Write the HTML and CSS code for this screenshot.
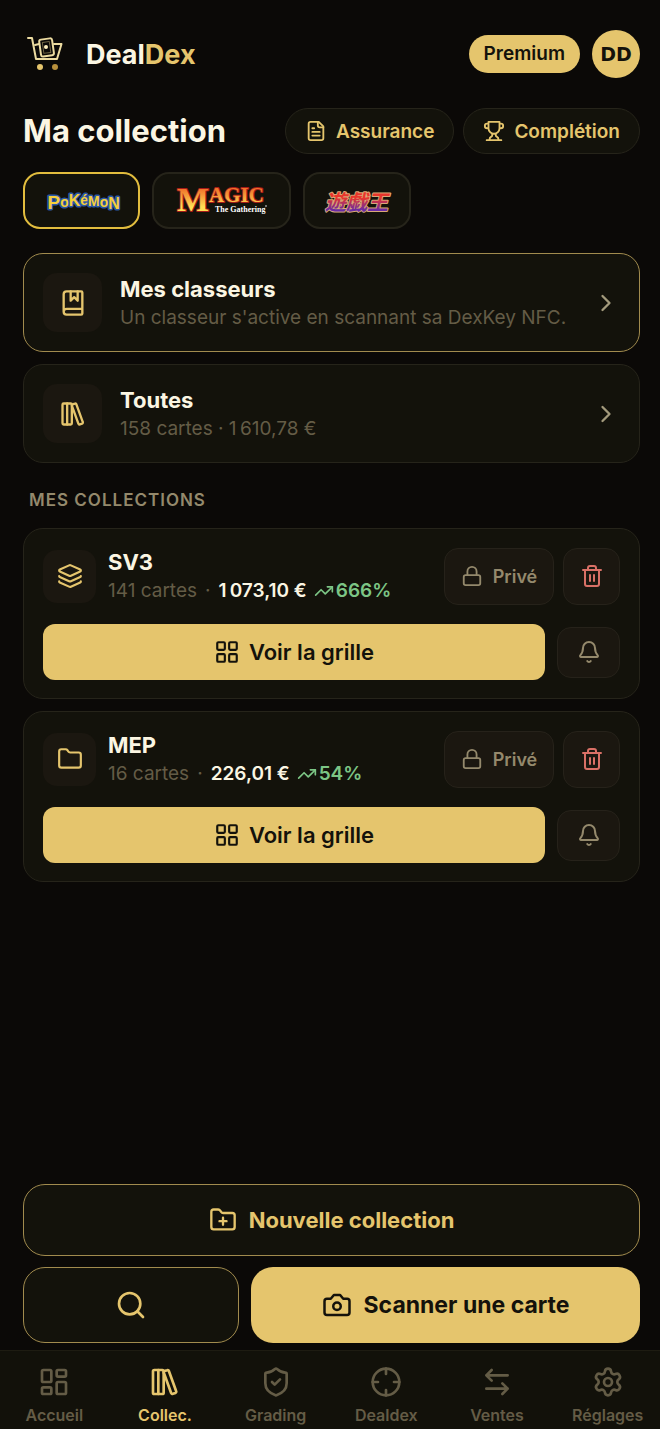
FILE: index.html
```
<!DOCTYPE html>
<html lang="fr">
<head>
  <meta charset="UTF-8" />
  <meta name="viewport" content="width=device-width, initial-scale=1.0"/>
  <title>DealDex - Ma collection</title>
  <link rel="stylesheet" href="styles.css">
</head>
<body>

  <!-- Shared icons -->
  <svg class="sprite" aria-hidden="true">
    <symbol id="i-chevron" viewBox="0 0 24 24"><path d="m9 18 6-6-6-6"/></symbol>
    <symbol id="i-books" viewBox="0 0 24 24"><rect x="3" y="3" width="8" height="18" rx="1"/><path d="M7 3v18"/><path d="M20.4 18.9c.2.5-.1 1.1-.6 1.3l-1.9.7c-.5.2-1.1-.1-1.3-.6L11.1 5.1c-.2-.5.1-1.1.6-1.3l1.9-.7c.5-.2 1.1.1 1.3.6Z"/></symbol>
    <symbol id="i-lock" viewBox="0 0 24 24"><rect x="3" y="11" width="18" height="11" rx="2"/><path d="M7 11V7a5 5 0 0 1 10 0v4"/></symbol>
    <symbol id="i-trash" viewBox="0 0 24 24"><path d="M3 6h18M19 6v14a2 2 0 0 1-2 2H7a2 2 0 0 1-2-2V6M8 6V4a2 2 0 0 1 2-2h4a2 2 0 0 1 2 2v2M10 11v6M14 11v6"/></symbol>
    <symbol id="i-bell" viewBox="0 0 24 24"><path d="M10.268 21a2 2 0 0 0 3.464 0"/><path d="M3.262 15.326A1 1 0 0 0 4 17h16a1 1 0 0 0 .74-1.673C19.41 13.956 18 12.499 18 8A6 6 0 0 0 6 8c0 4.499-1.411 5.956-2.738 7.326"/></symbol>
    <symbol id="i-grid" viewBox="0 0 24 24"><rect x="3" y="3" width="7" height="7" rx="1"/><rect x="14" y="3" width="7" height="7" rx="1"/><rect x="14" y="14" width="7" height="7" rx="1"/><rect x="3" y="14" width="7" height="7" rx="1"/></symbol>
    <symbol id="i-trend" viewBox="0 0 24 24"><path d="M16 7h6v6"/><path d="m22 7-8.5 8.5-5-5L2 17"/></symbol>
  </svg>

  <header class="topbar">
    <a class="brand" href="#">
      <svg class="brand-logo" viewBox="0 0 38 38" aria-hidden="true">
        <g fill="none" stroke="#ecdba0" stroke-width="2" stroke-linecap="round" stroke-linejoin="round">
          <path d="M2 3h4l4 21h21l4.500-15H28"/>
          <path d="M9 10l4-1"/>
          <rect x="14" y="4" width="13" height="17" rx="2" transform="rotate(-8 20 12)" fill="#0b0907"/>
          <rect x="17" y="7" width="7" height="11" transform="rotate(-8 20 12)" stroke="#6d6344" stroke-width="1"/>
        </g>
        <circle cx="20" cy="12" r="2" fill="#fff0bd"/>
        <circle cx="14" cy="32" r="3" fill="#e5c56d"/>
        <circle cx="29" cy="32" r="3" fill="#b8903c"/>
      </svg>
      <span class="brand-name">Deal<span>Dex</span></span>
    </a>
    <div class="account">
      <span class="premium">Premium</span>
      <button class="avatar" type="button" aria-label="Profil">DD</button>
    </div>
  </header>

  <main>
    <div class="title-row">
      <h1>Ma collection</h1>
      <div class="pills">
        <button class="pill" type="button">
          <svg class="icon s22" viewBox="0 0 24 24"><path d="M15 2H6a2 2 0 0 0-2 2v16a2 2 0 0 0 2 2h12a2 2 0 0 0 2-2V7Z"/><path d="M14 2v4a2 2 0 0 0 2 2h4M10 9H8M16 13H8M16 17H8"/></svg>
          Assurance
        </button>
        <button class="pill" type="button">
          <svg class="icon s22" viewBox="0 0 24 24"><path d="M6 9H4.500a2.500 2.500 0 0 1 0-5H6M18 9h1.500a2.500 2.500 0 0 0 0-5H18M4 22h16M10 14.660V17c0 .550-.470.980-.970 1.210C7.850 18.750 7 20.240 7 22M14 14.660V17c0 .550.470.980.970 1.210C16.150 18.750 17 20.240 17 22M18 2H6v7a6 6 0 0 0 12 0V2Z"/></svg>
          Complétion
        </button>
      </div>
    </div>

    <div class="games">
      <button class="game pokemon active" type="button" aria-label="Pokémon">
        <svg viewBox="0 0 76 34" aria-hidden="true">
          <text x="4" y="25"><tspan font-size="19">P</tspan><tspan dy="-2">o</tspan><tspan dy="-1" font-size="16">K</tspan><tspan dy="-1">é</tspan><tspan dy="1">M</tspan><tspan dy="1">o</tspan><tspan dy="2" font-size="16">N</tspan></text>
        </svg>
      </button>
      <button class="game magic" type="button" aria-label="Magic The Gathering">
        <svg viewBox="0 0 99 34" aria-hidden="true">
          <defs>
            <linearGradient id="fire" x1="0" y1="0" x2="0" y2="1"><stop offset="0.200" stop-color="#f0702a"/><stop offset="0.700" stop-color="#ffdf55"/></linearGradient>
          </defs>
          <text class="magic-word" y="27" x="5"><tspan font-size="34">M</tspan><tspan font-size="21" dy="-9">AGIC</tspan></text>
          <text class="magic-sub" x="43" y="28">The Gathering</text>
          <circle cx="94" cy="22" r="1" fill="#999"/>
        </svg>
      </button>
      <button class="game yugioh" type="button" aria-label="Yu-Gi-Oh!">
        <svg viewBox="0 0 68 34" aria-hidden="true">
          <defs>
            <linearGradient id="duel" x1="0" y1="0" x2="0" y2="1"><stop offset="0.400" stop-color="#e8352c"/><stop offset="0.800" stop-color="#6a2aa5"/></linearGradient>
          </defs>
          <text x="2" y="26">遊戯王</text>
        </svg>
      </button>
    </div>

    <a class="card link-card highlight" href="#">
      <span class="tile large"><svg class="icon s28" viewBox="0 0 24 24"><path d="M10 2v8l3-3 3 3V2"/><path d="M4 19.500v-15A2.500 2.500 0 0 1 6.500 2H19a1 1 0 0 1 1 1v18a1 1 0 0 1-1 1H6.500a1 1 0 0 1 0-5H20"/></svg></span>
      <span class="link-text">
        <strong>Mes classeurs</strong>
        <span>Un classeur s'active en scannant sa DexKey NFC.</span>
      </span>
      <svg class="icon s28 chevron"><use href="#i-chevron"/></svg>
    </a>

    <a class="card link-card" href="#">
      <span class="tile large"><svg class="icon s28"><use href="#i-books"/></svg></span>
      <span class="link-text">
        <strong>Toutes</strong>
        <span>158 cartes · 1&#8239;610,78 €</span>
      </span>
      <svg class="icon s28 chevron"><use href="#i-chevron"/></svg>
    </a>

    <h2>Mes collections</h2>

    <section class="card collection">
      <div class="collection-head">
        <span class="tile"><svg class="icon s26" viewBox="0 0 24 24"><path d="M12.830 2.180a2 2 0 0 0-1.660 0L2.600 6.080a1 1 0 0 0 0 1.830l8.580 3.910a2 2 0 0 0 1.660 0l8.580-3.900a1 1 0 0 0 0-1.830z"/><path d="M2 12a1 1 0 0 0 .580.910l8.600 3.910a2 2 0 0 0 1.650 0l8.580-3.900A1 1 0 0 0 22 12"/><path d="M2 17a1 1 0 0 0 .580.910l8.600 3.910a2 2 0 0 0 1.650 0l8.580-3.900A1 1 0 0 0 22 17"/></svg></span>
        <div class="collection-text">
          <h3>SV3</h3>
          <p><span>141 cartes</span><span class="dot">·</span><b>1&#8239;073,10 €</b><span class="gain"><svg class="icon s20"><use href="#i-trend"/></svg>666%</span></p>
        </div>
        <button class="ghost private" type="button"><svg class="icon s22"><use href="#i-lock"/></svg>Privé</button>
        <button class="ghost delete" type="button" aria-label="Supprimer"><svg class="icon s24"><use href="#i-trash"/></svg></button>
      </div>
      <div class="collection-actions">
        <button class="gold grid-btn" type="button"><svg class="icon s26"><use href="#i-grid"/></svg>Voir la grille</button>
        <button class="ghost bell" type="button" aria-label="Alertes"><svg class="icon s24"><use href="#i-bell"/></svg></button>
      </div>
    </section>

    <section class="card collection">
      <div class="collection-head">
        <span class="tile"><svg class="icon s26" viewBox="0 0 24 24"><path d="M20 20a2 2 0 0 0 2-2V8a2 2 0 0 0-2-2h-7.900a2 2 0 0 1-1.690-.900L9.600 3.900A2 2 0 0 0 7.930 3H4a2 2 0 0 0-2 2v13a2 2 0 0 0 2 2Z"/></svg></span>
        <div class="collection-text">
          <h3>MEP</h3>
          <p><span>16 cartes</span><span class="dot">·</span><b>226,01 €</b><span class="gain"><svg class="icon s20"><use href="#i-trend"/></svg>54%</span></p>
        </div>
        <button class="ghost private" type="button"><svg class="icon s22"><use href="#i-lock"/></svg>Privé</button>
        <button class="ghost delete" type="button" aria-label="Supprimer"><svg class="icon s24"><use href="#i-trash"/></svg></button>
      </div>
      <div class="collection-actions">
        <button class="gold grid-btn" type="button"><svg class="icon s26"><use href="#i-grid"/></svg>Voir la grille</button>
        <button class="ghost bell" type="button" aria-label="Alertes"><svg class="icon s24"><use href="#i-bell"/></svg></button>
      </div>
    </section>
  </main>

  <div class="dock">
    <button class="outline new" type="button">
      <svg class="icon s28" viewBox="0 0 24 24"><path d="M12 10v6M9 13h6"/><path d="M20 20a2 2 0 0 0 2-2V8a2 2 0 0 0-2-2h-7.900a2 2 0 0 1-1.690-.900L9.600 3.900A2 2 0 0 0 7.930 3H4a2 2 0 0 0-2 2v13a2 2 0 0 0 2 2Z"/></svg>
      Nouvelle collection
    </button>
    <div class="dock-row">
      <button class="outline search" type="button" aria-label="Rechercher"><svg class="icon s32" viewBox="0 0 24 24"><circle cx="11" cy="11" r="8"/><path d="m21 21-4.300-4.300"/></svg></button>
      <button class="gold scan" type="button">
        <svg class="icon s30" viewBox="0 0 24 24"><path d="M14.500 4h-5L7 7H4a2 2 0 0 0-2 2v9a2 2 0 0 0 2 2h16a2 2 0 0 0 2-2V9a2 2 0 0 0-2-2h-3z"/><circle cx="12" cy="13" r="3"/></svg>
        Scanner une carte
      </button>
    </div>
  </div>

  <nav class="tabbar">
    <ul>
      <li><a href="#"><svg class="icon s32" viewBox="0 0 24 24"><rect x="3" y="3" width="7" height="9" rx="1"/><rect x="14" y="3" width="7" height="5" rx="1"/><rect x="14" y="12" width="7" height="9" rx="1"/><rect x="3" y="16" width="7" height="5" rx="1"/></svg>Accueil</a></li>
      <li><a class="current" href="#"><svg class="icon s32"><use href="#i-books"/></svg>Collec.</a></li>
      <li><a href="#"><svg class="icon s32" viewBox="0 0 24 24"><path d="M20 13c0 5-3.500 7.500-7.660 8.950a1 1 0 0 1-.670-.010C7.500 20.500 4 18 4 13V6a1 1 0 0 1 1-1c2 0 4.500-1.200 6.240-2.720a1.170 1.170 0 0 1 1.520 0C14.510 3.810 17 5 19 5a1 1 0 0 1 1 1z"/><path d="m9 12 2 2 4-4"/></svg>Grading</a></li>
      <li><a href="#"><svg class="icon s32" viewBox="0 0 24 24"><circle cx="12" cy="12" r="10"/><path d="M22 12h-4M6 12H2M12 6V2M12 22v-4"/></svg>Dealdex</a></li>
      <li><a href="#"><svg class="icon s32" viewBox="0 0 24 24"><path d="M8 3 4 7l4 4M4 7h16M16 21l4-4-4-4M20 17H4"/></svg>Ventes</a></li>
      <li><a href="#"><svg class="icon s32" viewBox="0 0 24 24"><path d="M9.671 4.136a2.340 2.340 0 0 1 4.659 0 2.340 2.340 0 0 0 3.319 1.915 2.340 2.340 0 0 1 2.330 4.033 2.340 2.340 0 0 0 0 3.831 2.340 2.340 0 0 1-2.330 4.033 2.340 2.340 0 0 0-3.319 1.915 2.340 2.340 0 0 1-4.659 0 2.340 2.340 0 0 0-3.320-1.915 2.340 2.340 0 0 1-2.330-4.033 2.340 2.340 0 0 0 0-3.831A2.340 2.340 0 0 1 6.350 6.051a2.340 2.340 0 0 0 3.319-1.915"/><circle cx="12" cy="12" r="3"/></svg>Réglages</a></li>
    </ul>
  </nav>

</body>
</html>
```

FILE: styles.css
```
* {
  box-sizing: border-box;
}

body {
  margin: 0;
  min-height: 100vh;
  display: flex;
  flex-direction: column;
  background: #0b0907;
  color: #fbf6e3;
  font-family: Inter, 'Liberation Sans', sans-serif;
}

h1, h2, h3, p, ul {
  margin: 0;
  padding: 0;
}

a {
  color: inherit;
  text-decoration: none;
}

button {
  display: flex;
  align-items: center;
  justify-content: center;
  padding: 0;
  font-family: inherit;
  cursor: pointer;
}

.sprite {
  display: none;
}

.icon {
  flex: none;
  fill: none;
  stroke: currentColor;
  stroke-width: 2;
  stroke-linecap: round;
  stroke-linejoin: round;
}

.s20 { width: 20px; height: 20px; }
.s22 { width: 22px; height: 22px; }
.s24 { width: 24px; height: 24px; }
.s26 { width: 26px; height: 26px; }
.s28 { width: 28px; height: 28px; }
.s30 { width: 30px; height: 30px; }
.s32 { width: 32px; height: 32px; }

/* Header */
.topbar {
  display: flex;
  align-items: center;
  justify-content: space-between;
  padding: 30px 20px 0 26px;
}

.brand {
  display: flex;
  align-items: center;
  gap: 22px;
}

.brand-logo {
  width: 38px;
  height: 38px;
}

.brand-name {
  font-size: 27px;
  font-weight: 700;
}

.brand-name span {
  color: #e5c56d;
}

.account {
  display: flex;
  align-items: center;
  gap: 12px;
}

.premium {
  padding: 0 15px;
  border-radius: 19px;
  background: #e5c56d;
  color: #14120b;
  font-size: 19px;
  font-weight: 600;
  line-height: 38px;
}

.avatar {
  width: 48px;
  height: 48px;
  border: 0;
  border-radius: 50%;
  background: #e5c56d;
  color: #14120b;
  font-family: 'DejaVu Sans', sans-serif;
  font-size: 19px;
  font-weight: 700;
}

main {
  padding: 30px 20px 20px 23px;
}

.title-row {
  display: flex;
  align-items: center;
  justify-content: space-between;
}

h1 {
  font-size: 31px;
  font-weight: 700;
  line-height: 40px;
}

.pills {
  display: flex;
  gap: 9px;
}

.pill {
  gap: 9px;
  height: 46px;
  padding: 0 19px;
  border: 1px solid #26241a;
  border-radius: 23px;
  background: #13120b;
  color: #e5c56d;
  font-size: 19px;
  font-weight: 600;
}

/* Game switcher */
.games {
  display: flex;
  gap: 12px;
  margin: 18px 0 24px;
}

.game {
  height: 57px;
  padding: 0 18px;
  border: 2px solid #26241a;
  border-radius: 17px;
  background: #13120b;
}

.game.active {
  border-color: #e2bd3e;
}

.game svg {
  height: 34px;
  overflow: visible;
}

.game text {
  stroke-linejoin: round;
  paint-order: stroke;
}

.pokemon svg { width: 77px; }
.magic svg { width: 99px; }
.yugioh svg { width: 68px; }

.pokemon text {
  font-family: 'Liberation Sans', sans-serif;
  font-size: 14px;
  font-weight: 700;
  fill: #f5cf3c;
  stroke: #2b57a5;
  stroke-width: 3;
}

.magic .magic-word {
  font-family: 'Liberation Serif', serif;
  font-weight: 700;
  fill: url(#fire);
  stroke: #a51c18;
  stroke-width: 2;
}

.magic .magic-sub {
  font-family: 'Liberation Serif', serif;
  font-size: 8px;
  font-weight: 700;
  fill: #fff;
}

.yugioh text {
  font-family: 'Noto Sans CJK JP', sans-serif;
  font-size: 21px;
  font-style: italic;
  font-weight: 700;
  fill: url(#duel);
  stroke: #d9a878;
  stroke-width: 2;
}

/* Cards */
.card {
  border: 1px solid #26241a;
  border-radius: 20px;
  background: #13120b;
}

.link-card {
  display: flex;
  align-items: center;
  padding: 19px;
  margin-bottom: 12px;
}

.highlight {
  border-color: #a18b4e;
}

.tile {
  display: flex;
  flex: none;
  align-items: center;
  justify-content: center;
  width: 53px;
  height: 53px;
  border-radius: 14px;
  background: #1b1710;
  color: #e5c56d;
}

.tile.large {
  width: 59px;
  height: 59px;
}

.link-text {
  display: flex;
  flex: 1;
  flex-direction: column;
  min-width: 0;
  margin-left: 18px;
}

.link-text strong {
  font-size: 22px;
  line-height: 30px;
}

.link-text span {
  color: #645c46;
  font-size: 19px;
  line-height: 28px;
}

.chevron {
  color: #a39a7c;
}

h2 {
  margin: 25px 6px 16px;
  color: #94896c;
  font-size: 17px;
  font-weight: 600;
  letter-spacing: 1px;
  line-height: 24px;
  text-transform: uppercase;
}

.collection {
  padding: 18px 19px;
  margin-bottom: 12px;
}

.collection-head,
.collection-actions {
  display: flex;
  align-items: center;
}

.collection-text {
  flex: 1;
  margin-left: 12px;
}

h3 {
  font-size: 22px;
  line-height: 30px;
}

.collection-text p {
  display: flex;
  align-items: center;
  color: #645c46;
  font-size: 19px;
  line-height: 28px;
  white-space: nowrap;
}

.dot {
  margin: 0 8px;
}

.collection-text b {
  color: #fbf6e3;
  font-weight: 600;
}

.gain {
  display: flex;
  align-items: center;
  gap: 2px;
  margin-left: 7px;
  color: #7cc585;
  font-weight: 600;
}

.ghost {
  border: 1px solid #26221a;
  border-radius: 14px;
  background: #1b1710;
  color: #94896c;
}

.private {
  gap: 10px;
  width: 110px;
  height: 57px;
  font-size: 18px;
  font-weight: 600;
}

.delete {
  width: 57px;
  height: 57px;
  margin-left: 9px;
  color: #d97066;
}

.collection-actions {
  gap: 12px;
  margin-top: 19px;
}

.bell {
  width: 63px;
  height: 51px;
}

.gold {
  border: 0;
  background: #e5c56d;
  color: #14120b;
  font-weight: 600;
}

.grid-btn {
  flex: 1;
  gap: 9px;
  height: 56px;
  border-radius: 12px;
  font-size: 22px;
}

/* Bottom actions */
.dock {
  display: flex;
  flex-direction: column;
  gap: 11px;
  margin-top: auto;
  padding: 0 20px 7px 23px;
}

.outline {
  border: 1px solid #a18b4e;
  border-radius: 22px;
  background: #13120b;
  color: #e5c56d;
}

.new {
  gap: 12px;
  height: 72px;
  font-size: 22px;
  font-weight: 700;
}

.dock-row {
  display: grid;
  grid-template-columns: 5fr 9fr;
  gap: 12px;
}

.search,
.scan {
  height: 76px;
  border-radius: 22px;
}

.scan {
  gap: 12px;
  font-size: 23px;
  font-weight: 700;
}

.tabbar {
  overflow: hidden;
  border-top: 1px solid #1e1c12;
  background: #12110a;
}

.tabbar ul {
  display: grid;
  grid-template-columns: repeat(6, 1fr);
  margin: 0 -3px 0 -1px;
  list-style: none;
}

.tabbar a {
  display: flex;
  flex-direction: column;
  align-items: center;
  gap: 6px;
  padding: 15px 0 3px;
  color: #645c46;
  font-size: 16px;
  font-weight: 600;
  line-height: 22px;
}

.tabbar .current {
  color: #e5c56d;
}
```
